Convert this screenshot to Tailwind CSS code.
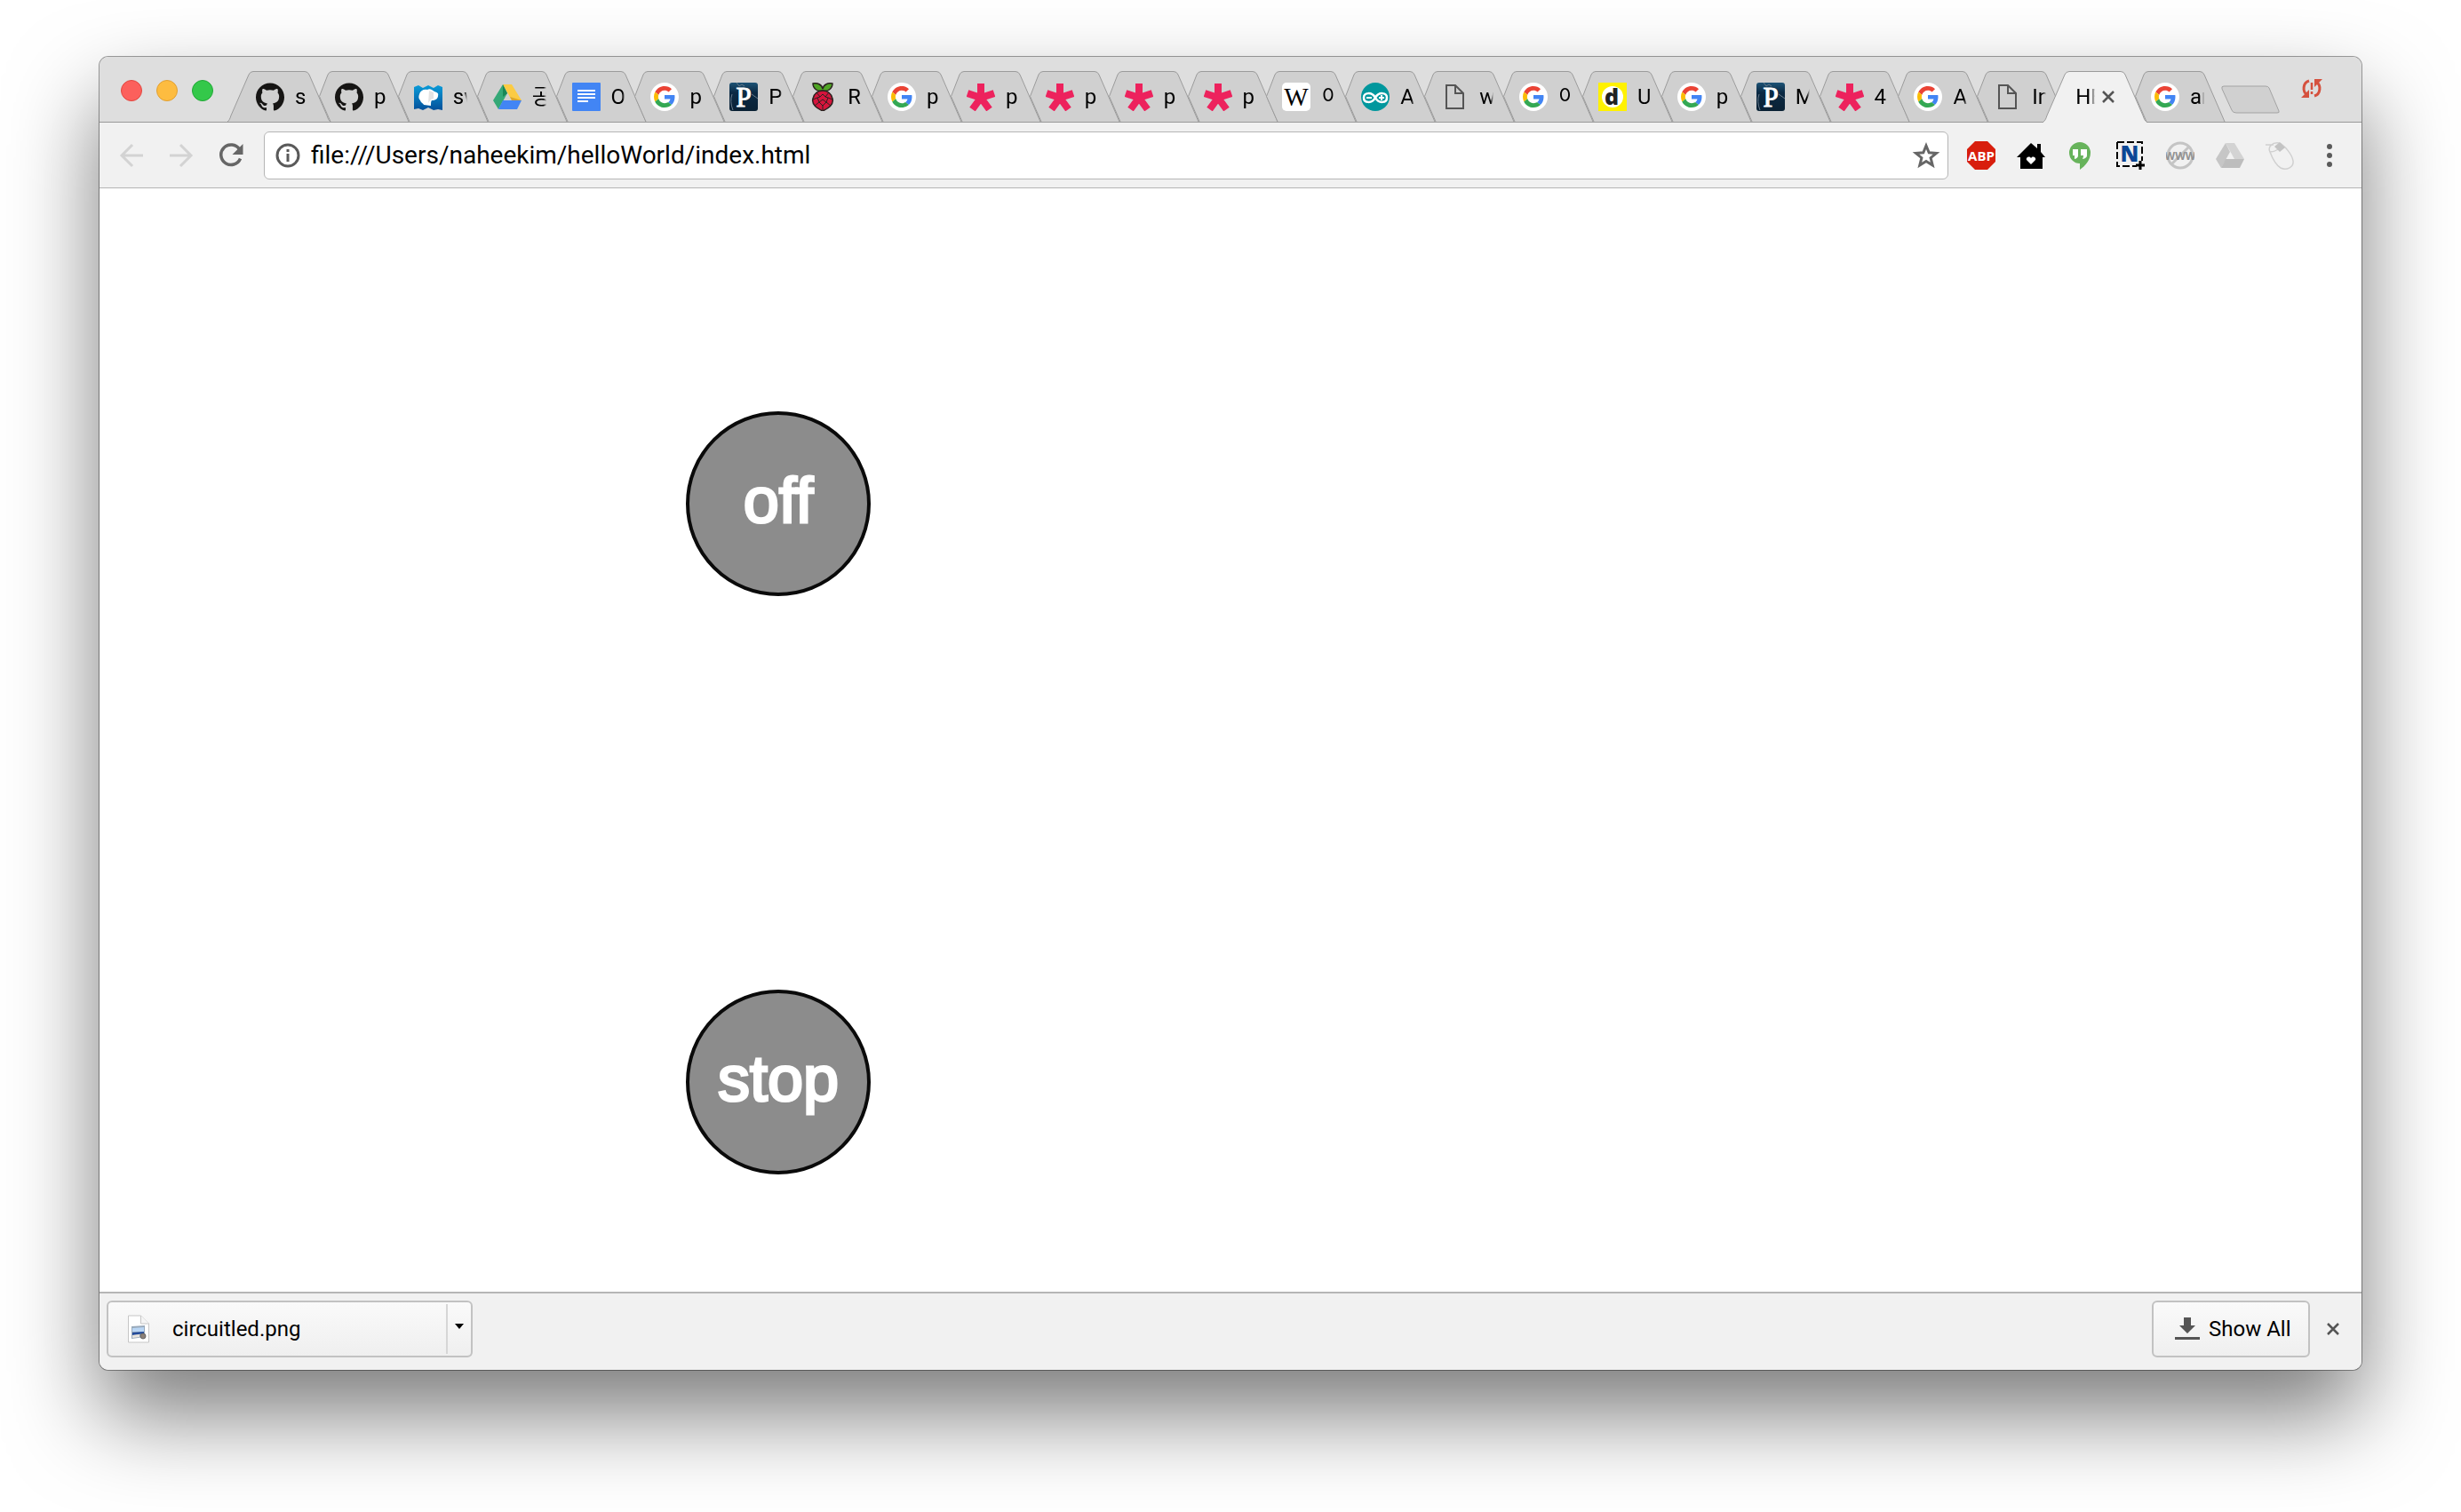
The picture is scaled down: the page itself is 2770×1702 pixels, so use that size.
<!DOCTYPE html>
<html lang="en">
<head>
<meta charset="utf-8">
<title>Hello World</title>
<script src="https://cdn.jsdelivr.net/npm/@tailwindcss/browser@4"></script>
</head>
<body class="flex min-h-screen flex-col bg-white px-28 pt-16 pb-40 font-[Roboto,'Noto_Sans_CJK_KR',sans-serif] text-black">

<svg class="absolute size-0" aria-hidden="true">
  <symbol id="github" viewBox="0 0 24 24"><path fill="#161514" d="M12 .297c-6.63 0-12 5.373-12 12 0 5.303 3.438 9.8 8.205 11.385.6.113.82-.258.82-.577 0-.285-.01-1.04-.015-2.04-3.338.724-4.042-1.61-4.042-1.61C4.422 18.07 3.633 17.7 3.633 17.7c-1.087-.744.084-.729.084-.729 1.205.084 1.838 1.236 1.838 1.236 1.07 1.835 2.809 1.305 3.495.998.108-.776.417-1.305.76-1.605-2.665-.3-5.466-1.332-5.466-5.93 0-1.31.465-2.38 1.235-3.22-.135-.303-.54-1.523.105-3.176 0 0 1.005-.322 3.3 1.23.96-.267 1.98-.399 3-.405 1.02.006 2.04.138 3 .405 2.28-1.552 3.285-1.23 3.285-1.23.645 1.653.24 2.873.12 3.176.765.84 1.23 1.91 1.23 3.22 0 4.61-2.805 5.625-5.475 5.92.42.36.81 1.096.81 2.22 0 1.606-.015 2.896-.015 3.286 0 .315.21.69.825.57C20.565 22.092 24 17.592 24 12.297c0-6.627-5.373-12-12-12"/></symbol>
  <linearGradient id="mapfill" x1="0" y1="0" x2="0" y2="1"><stop stop-color="#0a9bd8"/><stop offset="1" stop-color="#04509a"/></linearGradient>
  <linearGradient id="pfill" x1="0" y1="0" x2="0" y2="1"><stop stop-color="#1d5376"/><stop offset=".35" stop-color="#0b2a44"/><stop offset="1" stop-color="#0a2134"/></linearGradient>
  <symbol id="map" viewBox="0 0 32 32"><path fill="url(#mapfill)" d="M0 5l5-2 5 3 6-3 6 3 5-3 5 2v26l-5-1-5 1-6-3-6 3-5-2-5 1z"/><path fill="#fff" d="M6 13c1-4 5-6 9-5 3-2 6 1 8 2 3 1 5 2 4 5 0 3-3 5-7 5-1 1-1 3-1 6-3 0-5-1-8-1-1-2-3-2-4-5-2-2-2-4-1-7z"/><path fill="#e3e3e3" d="M17 9l5 2v7l-3 1-3 4z"/></symbol>
  <symbol id="drive" viewBox="0 0 32 32"><path fill="#34a877" d="M11 2l5 10-10 18-6-10z"/><path fill="#fbcb43" d="M11 2h10l11 18H21z"/><path fill="#4285f4" d="M11 20h21l-5 10H6z"/><path fill="#188756" d="M11 2l5 10-5 4z"/><path fill="#d9a52c" d="M21 20h11l-13-4z"/></symbol>
  <symbol id="docs" viewBox="0 0 32 32"><rect width="32" height="32" rx="1" fill="#4285f4"/><path stroke="#fff" stroke-width="2" d="M6 9h20M6 13h20M6 17h20M6 21h12"/></symbol>
  <symbol id="google" viewBox="0 0 64 64"><circle cx="32" cy="32" r="32" fill="#fff"/><g transform="translate(8 8)"><path fill="#EA4335" d="M24 9.500c3.540 0 6.710 1.220 9.210 3.600l6.850-6.850C35.900 2.380 30.470 0 24 0 14.620 0 6.510 5.380 2.560 13.220l7.980 6.190C12.430 13.720 17.740 9.500 24 9.500z"/><path fill="#4285F4" d="M46.980 24.550c0-1.570-.15-3.090-.38-4.550H24v9.020h12.940c-.58 2.960-2.260 5.480-4.780 7.180l7.730 6c4.510-4.180 7.090-10.360 7.090-17.650z"/><path fill="#FBBC05" d="M10.530 28.590c-.48-1.450-.76-2.990-.76-4.590s.27-3.140.76-4.590l-7.980-6.190C.92 16.460 0 20.120 0 24c0 3.880.92 7.540 2.560 10.780l7.970-6.190z"/><path fill="#34A853" d="M24 48c6.480 0 11.930-2.130 15.890-5.810l-7.730-6c-2.150 1.450-4.920 2.300-8.160 2.300-6.260 0-11.570-4.220-13.470-9.910l-7.980 6.190C6.510 42.620 14.620 48 24 48z"/></g></symbol>
  <symbol id="processing" viewBox="0 0 32 32"><rect width="32" height="32" rx="3" fill="url(#pfill)"/><path fill="none" stroke="#66798a" d="M25 13l7 5M3 13q-3 8 1 18M8 0l3 4 3-2 3 2"/><text x="16" y="27" text-anchor="middle" font-family="Liberation Serif, serif" font-size="31" fill="#fff" stroke="#fff">P</text></symbol>
  <symbol id="raspberry" viewBox="0 0 32 32"><g stroke="#2b2320" stroke-width="1.500"><path fill="#4fa524" d="M16 9C11 11 5 7 5 1c5-1 10 1 11 6 1-5 6-7 11-6 0 6-6 10-11 8z"/><path fill="#d6143c" d="M16 9c5 0 10 3 11 9 2 7-5 11-11 14C10 29 3 25 5 18c1-6 6-9 11-9z"/><path fill="none" stroke-width="1" d="M9 11l4 5 3-3 3 3 4-5M5 19l5-2 2 5 4-3 4 3 2-5 5 2M7 26l5-4 4 4 4-4 5 4M13 16l-3 1m9-1l3 1M16 26v5"/></g></symbol>
  <symbol id="p5" viewBox="0 0 32 32"><g stroke="#ed225d" stroke-width="8"><path d="M16 17V1M16 17l15-5M16 17l9.500 13M16 17L6.500 30M16 17L1 12"/></g></symbol>
  <symbol id="wikipedia" viewBox="0 0 32 32"><rect width="32" height="32" rx="5" fill="#fff"/><text x="16" y="26" text-anchor="middle" font-family="Liberation Serif, serif" font-size="29">W</text></symbol>
  <symbol id="arduino" viewBox="0 0 32 32"><circle cx="16" cy="16" r="16" fill="#00979d"/><path fill="none" stroke="#fff" stroke-width="2.500" d="M16 17c-4-7-13-6-13 0s9 7 13 0c4-7 13-6 13 0s-9 7-13 0z"/><path stroke="#fff" stroke-width="2" d="M6 17h6M20 17h6M23 14v6"/></symbol>
  <symbol id="file" viewBox="0 0 32 32"><path fill="none" stroke="#555" stroke-width="2" d="M7 3h10l9 9v17H7z"/><path fill="none" stroke="#555" stroke-width="2" d="M17 3v9h9"/></symbol>
  <symbol id="daum" viewBox="0 0 32 32"><path fill="#fff100" d="M0 0h32v32H0z"/><circle cx="16" cy="16" r="12" fill="#fff"/><text x="15" y="25" text-anchor="middle" font-family="Open Sans, sans-serif" font-weight="800" font-size="25" fill="#222">d</text></symbol>
  <symbol id="x" viewBox="0 0 14 14"><path fill="none" stroke="#555" stroke-width="2.500" d="M1 1l12 12M13 1L1 13"/></symbol>
</svg>

<div class="flex flex-1 flex-col overflow-hidden rounded-[10px] bg-white shadow-[0_0_0_1px_#00000060,0_50px_100px_#00000085]">

  <header class="flex h-[74px] bg-[linear-gradient(#999,#999)] bg-[length:100%_1px] bg-bottom bg-no-repeat bg-[#dedede]">
    <div class="mr-4 flex gap-4 pt-[26px] pl-6">
      <button aria-label="Close window" class="size-6 rounded-full border border-[#e2463f] bg-[#fc605c]"></button>
      <button aria-label="Minimize window" class="size-6 rounded-full border border-[#e1a032] bg-[#fdbc40]"></button>
      <button aria-label="Zoom window" class="size-6 rounded-full border border-[#20a835] bg-[#34c84a]"></button>
    </div>
    <nav aria-label="Tabs" class="min-w-0 flex-1 pt-4"><ul id="tabs" class="flex h-[58px]"></ul></nav>
    <button aria-label="New tab" class="mt-8 ml-[22px] h-8 w-[66px] self-start">
      <svg class="h-8 w-[66px]" viewBox="0 0 66 32"><path fill="#d0d0d0" stroke="#a3a3a3" d="M3 1h47q3 0 4 2l11 26q1 2-2 2H17q-4 0-5-3L1 4q-1-3 2-3z"/></svg>
    </button>
    <button aria-label="Update available" class="mt-6 mr-11 ml-6 size-6 self-start">
      <svg class="size-6" viewBox="0 0 24 24" fill="none" stroke="#d5513e" stroke-width="3"><path d="M9 3C2 5 1 15 7 19M15 20c7-2 8-12 2-16"/><path stroke-width="2.500" d="M12 5v8m0 2v3"/><path fill="#d5513e" stroke="none" d="M0 22h9v-9zM24 1h-9v9z"/></svg>
    </button>
  </header>

  <div class="flex h-[74px] items-center border-b border-[#b5b5b5] bg-[#f1f1f1] px-5">
    <div class="flex gap-6">
      <button aria-label="Back" class="size-8"><svg class="size-8" viewBox="0 0 32 32" fill="none" stroke="#d3d3d3" stroke-width="3"><path d="M29 16H5M17 4L5 16l12 12"/></svg></button>
      <button aria-label="Forward" class="size-8"><svg class="size-8" viewBox="0 0 32 32" fill="none" stroke="#d3d3d3" stroke-width="3"><path d="M3 16h24M15 4l12 12-12 12"/></svg></button>
      <button aria-label="Reload" class="size-8"><svg class="size-8" viewBox="0 0 32 32"><path fill="none" stroke="#666" stroke-width="3.500" d="M25.500 9A11.300 11.300 0 1 0 26.500 19.500"/><path fill="#666" d="M29.500 3v12h-12z"/></svg></button>
    </div>
    <form class="mx-[21px] flex h-[54px] flex-1 items-center rounded-md border border-[#b5b5b5] bg-white px-3">
      <svg class="mr-2 size-7" viewBox="0 0 28 28"><circle cx="14" cy="14" r="12" fill="none" stroke="#5a5a5a" stroke-width="3"/><path fill="#5a5a5a" d="M12.500 7h3v3h-3zM12.500 12h3v9h-3z"/></svg>
      <input aria-label="Address" class="min-w-0 flex-1 bg-transparent px-1 text-[28px] leading-8 outline-none" value="file:///Users/naheekim/helloWorld/index.html">
      <button type="button" aria-label="Bookmark this page" class="-mr-1 size-8"><svg class="size-8" viewBox="0 0 32 32"><path fill="none" stroke="#666" stroke-width="3" d="M16 5l3.200 7.800 8.300.6-6.400 5.300 2.100 8.300-7.200-4.500L8.800 27l2.100-8.300-6.400-5.300 8.300-.6z"/></svg></button>
    </form>
    <div class="flex gap-6">
      <button aria-label="Adblock Plus" class="size-8"><svg class="size-8" viewBox="0 0 32 32"><path fill="#d81e0d" d="M9 0h14l9 9v14l-9 9H9l-9-9V9z"/><text x="16" y="22" text-anchor="middle" font-family="Open Sans, sans-serif" font-weight="700" font-size="15" fill="#fff">ABP</text></svg></button>
      <button aria-label="Home" class="size-8"><svg class="size-8" viewBox="0 0 32 32"><path d="M16 2L0 18h4v13h25V18h3l-5-6V3h-4v5z"/><path fill="#fff" d="M16 26l-5-5c-1-3 3-5 5-2 2-3 6-1 5 2z"/></svg></button>
      <button aria-label="Hangouts" class="size-8"><svg class="size-8" viewBox="0 0 32 32"><path fill="#67b35b" d="M15 1a12 12 0 0 1 12 12c0 8-6 15-12 19v-7A12 12 0 0 1 15 1z"/><path fill="#fff" d="M7 9h6v7q0 3-4 4v-4H7zM16 9h7v7q0 3-5 4 1-2 1-4h-3z"/></svg></button>
      <button aria-label="Clipper" class="size-8"><svg class="size-8" viewBox="0 0 32 32"><path fill="none" stroke="#000" stroke-width="2" stroke-dasharray="8 3" d="M1 1h28v21M1 1v27h22"/><text x="15" y="23" text-anchor="middle" font-family="Open Sans, sans-serif" font-weight="800" font-size="25" fill="#0c4795">N</text><path stroke="#000" stroke-width="3" d="M22 27h10M27 22v10"/></svg></button>
      <button aria-label="Web blocker" class="size-8"><svg class="size-8" viewBox="0 0 32 32"><g fill="none" stroke="#c4c4c4" stroke-width="3"><circle cx="16" cy="16" r="14"/><path d="M26 6L6 26"/></g><text x="16" y="21" text-anchor="middle" font-family="Open Sans, sans-serif" font-weight="700" font-size="12" fill="#929292">WWW</text></svg></button>
      <button aria-label="Drive" class="size-8"><svg class="size-8" viewBox="0 0 32 32"><path fill="#c6c6c6" d="M11 2l5 10-10 18-6-10z"/><path fill="#d3d3d3" d="M11 2h10l11 18H21z"/><path fill="#bdbdbd" d="M11 20h21l-5 10H6z"/></svg></button>
      <button aria-label="Mouse gestures" class="size-8"><svg class="size-8" viewBox="0 0 32 32" fill="none" stroke="#d0d0d0" stroke-width="1.500"><path d="M0 4h9M5 12C2 6 8 1 15 2c6 2 15 13 16 20 1 8-8 11-14 8C12 27 8 20 5 12zM5 12c6 0 11-3 12-9"/><path fill="#c3c3c3" stroke="none" d="M10 6l6-5 6 6-6 5z"/></svg></button>
      <button aria-label="Menu" class="size-8"><svg class="size-8" viewBox="0 0 32 32" fill="#5a5a5a"><circle cx="16" cy="6" r="3"/><circle cx="16" cy="16" r="3"/><circle cx="16" cy="26" r="3"/></svg></button>
    </div>
  </div>

  <main class="flex flex-1 flex-col items-start gap-[443px] pt-[251px] pl-[660px] font-['Liberation_Sans',Arial,sans-serif]">
    <button class="size-52 rounded-full border-4 border-[#0a0a0a] bg-[#8c8c8c] pb-2 text-7xl text-white [-webkit-text-stroke:3px_white]">off</button>
    <button class="size-52 rounded-full border-4 border-[#0a0a0a] bg-[#8c8c8c] pb-2 text-7xl text-white [-webkit-text-stroke:3px_white]">stop</button>
  </main>

  <footer class="flex h-[88px] items-start border-t-2 border-[#b5b5b5] bg-[#f1f1f1] px-2 pt-2 text-2xl">
    <div class="flex h-16 w-[412px] rounded-md border-2 border-[#c2c2c2] bg-linear-to-b from-[#fafafa] to-[#efefef]">
      <button class="flex flex-1 items-center pl-[22px]">
        <svg class="mr-[26px] h-8 w-6" viewBox="0 0 24 32"><path fill="#fff" stroke="#c6c6c6" d="M.5 1h14l9 9v21H.5z"/><path fill="#f5f5f5" stroke="#c6c6c6" d="M14.500 1v9h9"/><path fill="#9ab" d="M4 13l15-1v13L4 27z"/><path fill="#b9d6f5" d="M5 15l13-1v5H5z"/><path fill="#234b9b" d="M5 20l13-1v2L5 23z"/><path fill="#e6e2dc" d="M5 23l8-1v3l-8 1z"/><circle cx="17" cy="24" r="3" fill="#8b8078" stroke="#666"/></svg>
        <span>circuitled.png</span>
      </button>
      <button aria-label="Download options" class="my-0.5 flex w-7 justify-center border-l-2 border-[#d6d6d6] pt-[22px]"><svg class="h-[6px] w-[10px]" viewBox="0 0 10 6"><path d="M0 0h10L5 6z"/></svg></button>
    </div>
    <button class="ml-auto flex h-16 w-[178px] items-center gap-2.5 rounded-md border-2 border-[#c2c2c2] bg-linear-to-b from-[#fafafa] to-[#efefef] pl-6">
      <svg class="h-[26px] w-7" viewBox="0 0 28 26" fill="#555"><path d="M10 0h8v9h5l-9 9-9-9h5zM0 22h28v3H0z"/></svg>
      <span>Show All</span>
    </button>
    <button aria-label="Close downloads bar" class="mr-[17px] ml-[19px] flex h-16 items-center"><svg class="size-[14px]"><use href="#x"/></svg></button>
  </footer>
</div>

<script>
  const tabs = [
    ['github', 's'], ['github', 'p'], ['map', 'sw'], ['drive', '공'], ['docs', 'O'],
    ['google', 'p'], ['processing', 'P'], ['raspberry', 'R'], ['google', 'p'], ['p5', 'p'],
    ['p5', 'p'], ['p5', 'p'], ['p5', 'p'], ['wikipedia', '이'], ['arduino', 'A'],
    ['file', 'w'], ['google', '이'], ['daum', 'U'], ['google', 'p'], ['processing', 'M'],
    ['p5', '4'], ['google', 'A'], ['file', 'In'], [null, 'HE'], ['google', 'ar'],
  ];
  // Every tab but the first and the active one starts behind its left neighbour.
  const full = 'M0 57C2 56 3 53 4 50L24 4Q25.500 .5 29 .5H87Q90.500 .5 92 4L112 50C113 53 114 56 116 57';
  const tucked = 'M27 57L14.500 28.500L24 4Q25.500 .5 29 .5H87Q90.500 .5 92 4L112 50L115 57';
  document.getElementById('tabs').innerHTML = tabs.map(([icon, label], i) => {
    const shape = !icon || i === 0 ? full : tucked;
    const art = `<svg class="col-start-1 row-start-1 h-[58px] w-[116px]" viewBox="0 0 116 58"><path d="${shape}${icon ? '' : 'V58H0Z'}" fill="${icon ? '#d0d0d0' : '#f1f1f1'}"/><path d="${shape}" fill="none" stroke="#9b9b9b"/></svg>`;
    const body = icon
      ? `<a href="#" class="col-start-1 row-start-1 flex items-center pl-8"><svg class="mr-3 size-8 shrink-0"><use href="#${icon}"/></svg><span class="w-4 overflow-hidden whitespace-nowrap text-2xl [mask-image:linear-gradient(to_right,black_80%,transparent)]">${label}</span></a>`
      : `<div class="col-start-1 row-start-1 flex items-center pl-9"><a href="#" aria-current="page" class="w-[22px] overflow-hidden whitespace-nowrap text-2xl [mask-image:linear-gradient(to_right,black_80%,transparent)]">${label}</a><button aria-label="Close tab" class="ml-2 flex size-[14px]"><svg class="size-[14px]"><use href="#x"/></svg></button></div>`;
    return `<li class="min-w-0 flex-1"><div class="grid h-[58px] w-[116px] grid-rows-[58px]">${art}${body}</div></li>`;
  }).join('');
</script>
</body>
</html>
